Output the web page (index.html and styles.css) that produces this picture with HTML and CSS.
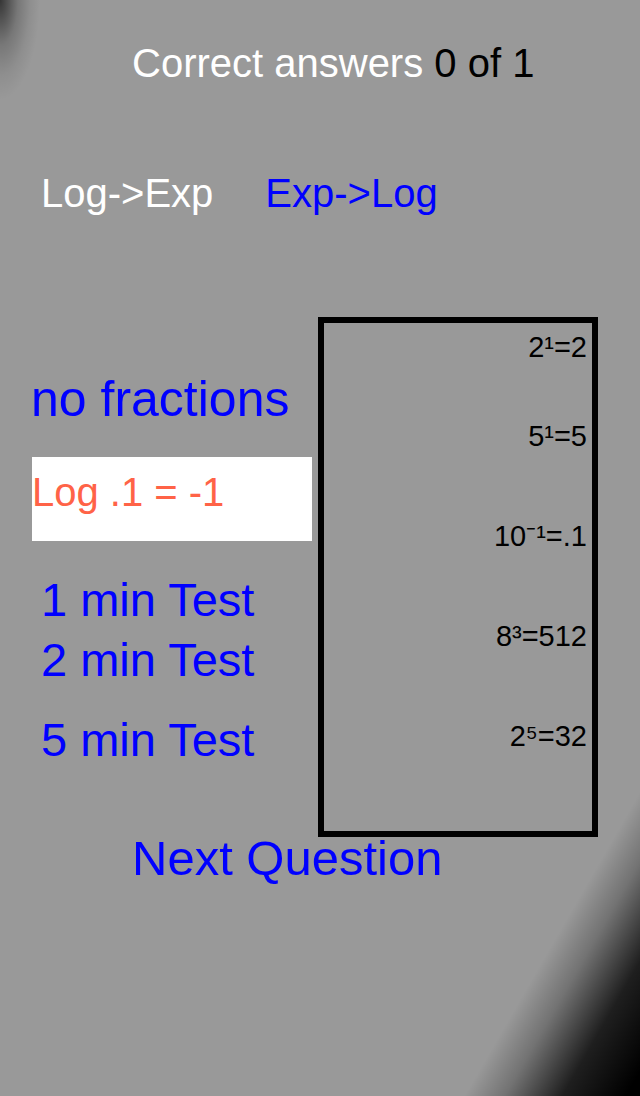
FILE: index.html
```html
<!DOCTYPE html>
<html>
<head>
<meta charset="utf-8">
<link rel="stylesheet" href="styles.css">
</head>
<body>
<div class="screen">
  <div class="score"><span class="score-label">Correct answers </span><span class="score-num">0 of 1</span></div>
  <div class="modes">
    <span class="mode mode-active">Log-&gt;Exp</span>
    <span class="mode mode-link">Exp-&gt;Log</span>
  </div>
  <div class="middle">
    <div class="left">
      <div class="fractions">no fractions</div>
      <div class="answer">Log .1 = -1</div>
      <div class="test test-1">1 min Test</div>
      <div class="test test-2">2 min Test</div>
      <div class="test test-5">5 min Test</div>
    </div>
    <div class="eqbox">
      <div class="eq eq-first">2¹=2</div>
      <div class="eq">5¹=5</div>
      <div class="eq">10⁻¹=.1</div>
      <div class="eq">8³=512</div>
      <div class="eq">2⁵=32</div>
    </div>
  </div>
  <div class="next">Next Question</div>
</div>
</body>
</html>
```

FILE: styles.css
```css
html, body {
  margin: 0;
  padding: 0;
}
body {
  width: 640px;
  height: 1096px;
  overflow: hidden;
  font-family: "Liberation Sans", Arial, sans-serif;
  background:
    radial-gradient(ellipse 40px 100px at 0 0, rgba(0,0,0,0.65), rgba(0,0,0,0.22) 45%, rgba(0,0,0,0.07) 75%, rgba(0,0,0,0) 100%),
    linear-gradient(120deg, rgba(0,0,0,0) 950px, rgba(0,0,0,0.25) 985px, rgba(0,0,0,0.8) 1035px, rgba(0,0,0,1) 1090px),
    #999999;
}
.screen {
  display: flex;
  flex-direction: column;
}
.score {
  padding-top: 43px;
  padding-left: 132px;
  font-size: 40px;
  line-height: 1;
  white-space: pre;
}
.score-label { color: #ffffff; }
.score-num { color: #000000; }
.modes {
  margin-top: 90px;
  padding-left: 41px;
  display: flex;
  gap: 52px;
  font-size: 40px;
  line-height: 1;
}
.mode-active { color: #ffffff; }
.mode-link { color: #0000ff; }
.middle {
  margin-top: 104px;
  padding-left: 32px;
  display: flex;
  gap: 6px;
  align-items: flex-start;
}
.left {
  width: 280px;
  display: flex;
  flex-direction: column;
}
.fractions {
  margin-top: 57px;
  margin-left: -1px;
  font-size: 50px;
  line-height: 1;
  color: #0000ff;
  white-space: nowrap;
}
.answer {
  margin-top: 33px;
  height: 84px;
  box-sizing: border-box;
  padding-top: 15px;
  background: #ffffff;
  color: #ff6347;
  font-size: 40px;
  line-height: 1;
}
.test {
  font-size: 47px;
  line-height: 1;
  color: #0000ff;
  white-space: nowrap;
}
.test-1 { margin-top: 35px; padding-left: 9px; }
.test-2 { margin-top: 13px; padding-left: 9px; }
.test-5 { margin-top: 33px; padding-left: 9px; }
.eqbox {
  width: 280px;
  height: 520px;
  box-sizing: border-box;
  border: 6px solid #000000;
  padding: 10px 5px 0 0;
  display: flex;
  flex-direction: column;
  gap: 71px;
  text-align: right;
}
.eq {
  font-size: 29px;
  line-height: 1;
  color: #000000;
}
.eq-first { margin-bottom: -11px; }
.next {
  margin-top: -3px;
  padding-left: 132px;
  font-size: 49px;
  line-height: 1;
  color: #0000ff;
}
```
